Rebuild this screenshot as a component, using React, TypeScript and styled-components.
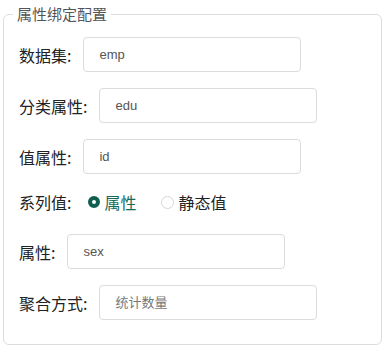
import { useState } from "react";
import styled, { createGlobalStyle } from "styled-components";

const GlobalStyle = createGlobalStyle`
  body {
    margin: 0;
    background: #fff;
    font-family: "Liberation Sans", "Noto Sans CJK SC", sans-serif;
  }
`;

const Page = styled.div`
  width: 388px;
  height: 358px;
  padding: 4px 6px 0 3px;
  box-sizing: border-box;
`;

const Fieldset = styled.fieldset`
  margin: 0;
  border: 1px solid #dcdcdc;
  border-radius: 6px;
  padding: 0 15px 24px 15px;
  min-width: 0;
`;

const Legend = styled.legend`
  margin-left: -6px;
  padding: 0 4px;
  font-family: "Noto Sans CJK SC", sans-serif;
  font-size: 15px;
  line-height: 20px;
  color: #555;
`;

const Row = styled.div<{ $compact?: boolean }>`
  display: flex;
  align-items: center;
  box-sizing: border-box;
  height: ${(p) => (p.$compact ? "28px" : "35px")};
  padding-bottom: ${(p) => (p.$compact ? "4px" : "0")};
  margin-top: 16px;
  &:first-of-type {
    margin-top: 13px;
  }
`;

const Label = styled.span`
  font-family: "Noto Sans CJK SC", sans-serif;
  font-size: 16px;
  color: #222;
  margin-right: 12px;
  white-space: nowrap;
`;

const Input = styled.input`
  width: 218px;
  height: 35px;
  box-sizing: border-box;
  border: 1px solid #dcdcdc;
  border-radius: 4px;
  padding: 0 15px;
  font-family: "Liberation Sans", "Noto Sans CJK SC", sans-serif;
  font-size: 13px;
  color: #555;
  outline: none;
  &::placeholder {
    color: #777;
  }
`;

const RadioGroup = styled.div`
  display: flex;
  align-items: center;
  padding-left: 5px;
  gap: 25px;
`;

const RadioItem = styled.label<{ $checked: boolean }>`
  display: flex;
  align-items: center;
  gap: 4px;
  cursor: pointer;
  font-family: "Noto Sans CJK SC", sans-serif;
  font-size: 16px;
  color: ${(p) => (p.$checked ? "#176b5b" : "#222")};
`;

const Dot = styled.span<{ $checked: boolean }>`
  width: ${(p) => (p.$checked ? "12px" : "13px")};
  height: ${(p) => (p.$checked ? "12px" : "13px")};
  box-sizing: border-box;
  border-radius: 50%;
  border: ${(p) => (p.$checked ? "4px solid #0f5e4e" : "1px solid #d6d6d6")};
  background: #fff;
`;

export default function App() {
  const [mode, setMode] = useState("attr");

  return (
    <Page>
      <GlobalStyle />
      <Fieldset>
        <Legend>属性绑定配置</Legend>
        <Row>
          <Label>数据集:</Label>
          <Input defaultValue="emp" />
        </Row>
        <Row>
          <Label>分类属性:</Label>
          <Input defaultValue="edu" />
        </Row>
        <Row>
          <Label>值属性:</Label>
          <Input defaultValue="id" />
        </Row>
        <Row $compact>
          <Label>系列值:</Label>
          <RadioGroup>
            <RadioItem $checked={mode === "attr"} onClick={() => setMode("attr")}>
              <Dot $checked={mode === "attr"} />
              属性
            </RadioItem>
            <RadioItem $checked={mode === "static"} onClick={() => setMode("static")}>
              <Dot $checked={mode === "static"} />
              静态值
            </RadioItem>
          </RadioGroup>
        </Row>
        <Row>
          <Label>属性:</Label>
          <Input defaultValue="sex" />
        </Row>
        <Row>
          <Label>聚合方式:</Label>
          <Input placeholder="统计数量" />
        </Row>
      </Fieldset>
    </Page>
  );
}
